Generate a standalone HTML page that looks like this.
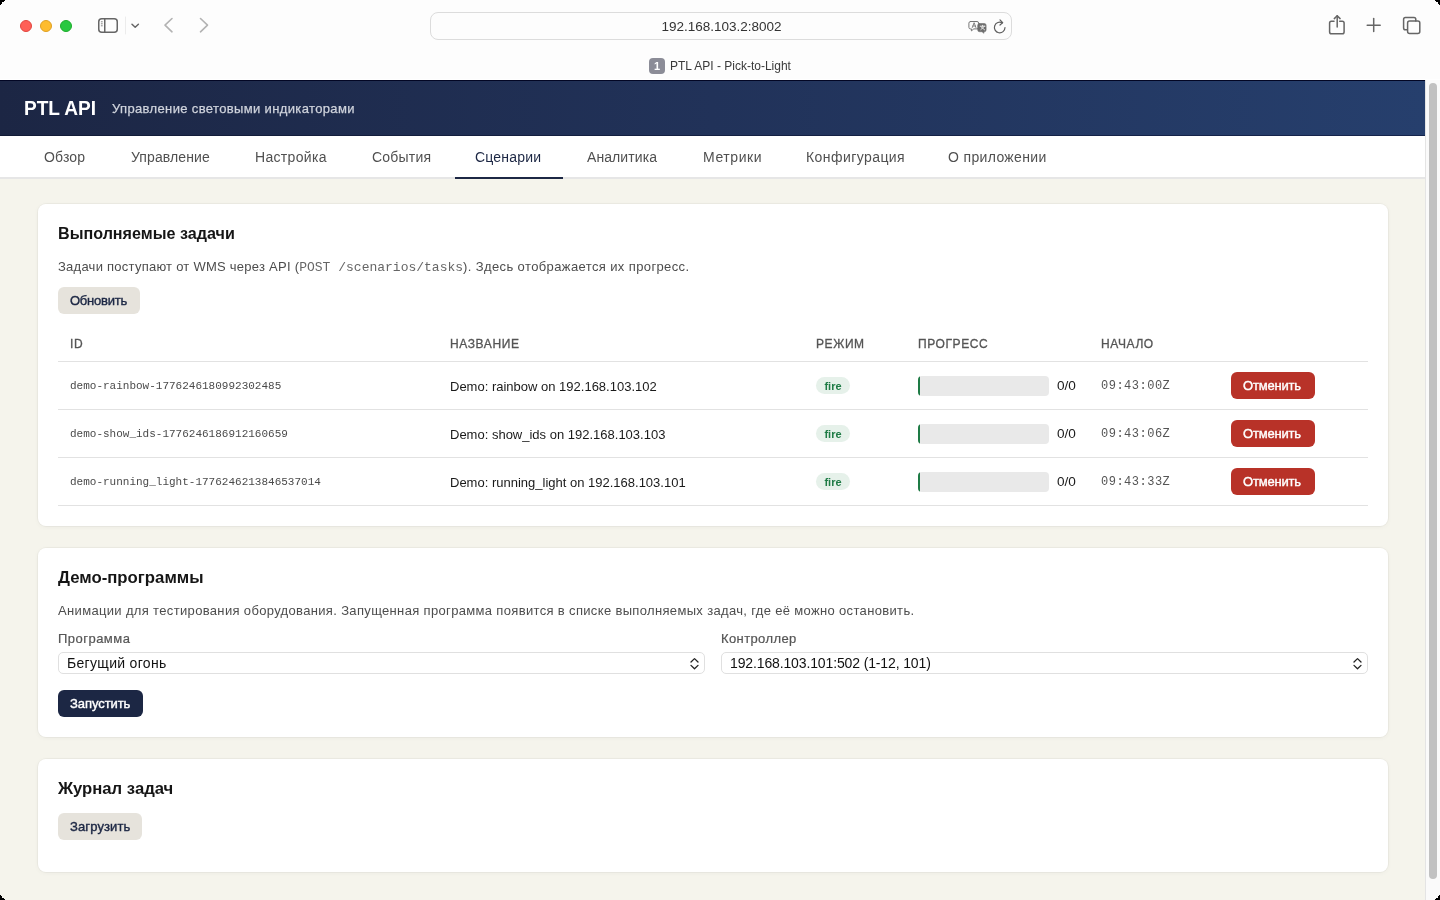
<!DOCTYPE html>
<html><head><meta charset="utf-8">
<style>
*{box-sizing:border-box;margin:0;padding:0}
html,body{width:1440px;height:900px;overflow:hidden;background:#f5f4ec;font-family:"Liberation Sans",sans-serif;color:#1a1a1a}
.a{position:absolute;white-space:nowrap}
.sx{display:inline-block;transform-origin:0 50%}
#chrome{position:absolute;left:0;top:0;width:1440px;height:80px;background:#fdfdfd}
.tl{position:absolute;width:12px;height:12px;border-radius:50%;top:20px}
#url{position:absolute;left:429.5px;top:12px;width:582px;height:28px;border:1px solid #dcdcdc;border-radius:8px;background:#fdfdfd}
#header{position:absolute;left:0;top:80px;width:1425px;height:56px;background:linear-gradient(90deg,#1c2644 0%,#213259 50%,#263f6d 100%)}
#nav{position:absolute;left:0;top:136px;width:1425px;height:43px;background:#fff;border-bottom:2px solid #e6e6e6}
.tab{position:absolute;top:149px;font-size:14px;color:#505050;line-height:16px;white-space:nowrap}
#scroll{position:absolute;left:1425px;top:80px;width:15px;height:820px;background:#fafafa;border-left:1px solid #e4e4e4}
#thumb{position:absolute;left:1429px;top:83px;width:8px;height:796px;border-radius:4px;background:#c1c1c1}
.card{position:absolute;left:38px;width:1350px;background:#fff;border-radius:8px;box-shadow:0 0 0 1px rgba(0,0,0,.035),0 1px 5px rgba(40,40,0,.045)}
.h2{position:absolute;left:58px;font-size:17px;font-weight:bold;color:#151515;line-height:20px;white-space:nowrap}
.desc{position:absolute;left:58px;font-size:13px;color:#4d4d4d;line-height:16px;white-space:nowrap}
.mono{font-family:"Liberation Mono",monospace;letter-spacing:0}
.btn{position:absolute;height:27px;border-radius:6px;font-size:13px;font-weight:normal;line-height:27px;white-space:nowrap;-webkit-text-stroke:.4px currentColor}
.btn span{position:absolute;left:12px;top:0;transform-origin:0 50%}
.btn.sec{background:#e6e3dc;color:#1c2744}
.btn.dark{background:#1c2744;color:#fff;-webkit-text-stroke:.4px #fff}
.btn.red{background:#b83228;color:#fff;-webkit-text-stroke:.4px #fff}
.th{position:absolute;top:337px;font-size:12px;font-weight:normal;color:#555;letter-spacing:.6px;line-height:14px;-webkit-text-stroke:.3px currentColor}
.hr{position:absolute;left:58px;width:1310px;height:1px;background:#e2e2e2}
.cell{position:absolute;font-size:13px;line-height:16px;white-space:nowrap;color:#1a1a1a}
.id{position:absolute;left:70px;font-family:"Liberation Mono",monospace;font-size:11px;color:#4a4a4a;line-height:14px;white-space:nowrap}
.badge{position:absolute;left:816px;width:34px;height:17px;border-radius:9px;background:#e6f1ea;color:#1e7b45;font-size:11px;font-weight:bold;text-align:center;line-height:18px}
.bar{position:absolute;left:918px;width:131px;height:20px;border-radius:4px;background:#e9e9e9;overflow:hidden}
.bar i{position:absolute;left:0;top:0;width:2px;height:20px;background:#1e7b45}
.time{position:absolute;left:1101px;font-family:"Liberation Mono",monospace;font-size:12px;color:#555;line-height:14px;letter-spacing:.5px;white-space:nowrap}
.label{position:absolute;font-size:13px;color:#555;line-height:16px;white-space:nowrap;-webkit-text-stroke:.2px currentColor}
.sel{position:absolute;top:652px;height:22px;border:1px solid #e0e0e0;border-radius:5px;background:#fff}
.sel span{position:absolute;left:8px;top:2px;font-size:14px;color:#111;line-height:16px;white-space:nowrap}
.sel svg{position:absolute;left:631px;top:3.5px}
.wrap{position:absolute;left:0;top:0;width:1440px;height:900px;will-change:transform}</style></head><body><div class="wrap">
<div id="chrome">
  <div id="url"></div>
  <div class="tl" style="left:20px;background:#ff5f57;border:0.5px solid #e2463f"></div>
  <div class="tl" style="left:40px;background:#febc2e;border:0.5px solid #dfa023"></div>
  <div class="tl" style="left:60px;background:#28c840;border:0.5px solid #1dad2b"></div>
  <svg class="a" style="left:0;top:0" width="1440" height="80" viewBox="0 0 1440 80" fill="none" stroke-linecap="round" stroke-linejoin="round">
    <!-- sidebar -->
    <rect x="98.75" y="18.75" width="18.5" height="13.5" rx="3" stroke="#666" stroke-width="1.5"/>
    <line x1="104.75" y1="19" x2="104.75" y2="32" stroke="#666" stroke-width="1.5"/>
    <line x1="101.3" y1="21.8" x2="102.3" y2="21.8" stroke="#777" stroke-width="0.9"/>
    <line x1="101.3" y1="23.8" x2="102.3" y2="23.8" stroke="#777" stroke-width="0.9"/>
    <line x1="101.3" y1="25.8" x2="102.3" y2="25.8" stroke="#777" stroke-width="0.9"/>
    <line x1="125.5" y1="17" x2="125.5" y2="34" stroke="#ececec" stroke-width="1"/>
    <!-- chevron down -->
    <polyline points="132,24.2 135.2,27.2 138.4,24.2" stroke="#666" stroke-width="1.5"/>
    <!-- back/forward -->
    <polyline points="172,18.5 165,25.2 172,31.8" stroke="#b3b3b3" stroke-width="1.6"/>
    <polyline points="200.5,18.5 207.5,25.2 200.5,31.8" stroke="#b3b3b3" stroke-width="1.6"/>
    <!-- translate -->
    <path d="M970.5 21.5 h6.5 a1.6 1.6 0 0 1 1.6 1.6 v4.2 a1.6 1.6 0 0 1 -1.6 1.6 h-3.2 l-2.4 2 v-2 h-0.9 a1.6 1.6 0 0 1 -1.6 -1.6 v-4.2 a1.6 1.6 0 0 1 1.6 -1.6z" stroke="#777" stroke-width="1"/>
    <path d="M972.3 27.5 l1.8 -4.8 l1.8 4.8 M972.9 26 h2.4" stroke="#777" stroke-width="0.9"/>
    <path d="M979.5 23.5 h4.8 a1.8 1.8 0 0 1 1.8 1.8 v4.6 a1.8 1.8 0 0 1 -1.8 1.8 h-0.4 v1.6 l-1.9 -1.6 h-2.5 a1.8 1.8 0 0 1 -1.8 -1.8 v-4.6 a1.8 1.8 0 0 1 1.8 -1.8z" fill="#6e6e6e" stroke="#6e6e6e" stroke-width="0.6"/>
    <path d="M980.2 26.2 h4.8 M982.6 25.3 v1 M980.8 29.6 l3.6 -3.2 M981 26.8 l3.6 3" stroke="#fff" stroke-width="0.8"/>
    <!-- reload -->
    <path d="M1005 27.6 a5.3 5.3 0 1 1 -2.7 -4.7" stroke="#5e5e5e" stroke-width="1.2"/>
    <polyline points="1000,19.9 1002.7,22.6 1000,25" stroke="#5e5e5e" stroke-width="1.2"/>
    <!-- share -->
    <path d="M1334 21.3 h-2.6 a1.8 1.8 0 0 0 -1.8 1.8 v8.9 a1.8 1.8 0 0 0 1.8 1.8 h10.9 a1.8 1.8 0 0 0 1.8 -1.8 v-8.9 a1.8 1.8 0 0 0 -1.8 -1.8 h-2.6" stroke="#666" stroke-width="1.5"/>
    <line x1="1337.2" y1="15.8" x2="1337.2" y2="27" stroke="#666" stroke-width="1.5"/>
    <polyline points="1334.3,18.6 1337.2,15.8 1340.1,18.6" stroke="#666" stroke-width="1.5"/>
    <!-- plus -->
    <line x1="1373.7" y1="18.6" x2="1373.7" y2="31.6" stroke="#666" stroke-width="1.5"/>
    <line x1="1367.2" y1="25.2" x2="1380.2" y2="25.2" stroke="#666" stroke-width="1.5"/>
    <!-- tabs -->
    <path d="M1407 29.8 h-1.6 a1.8 1.8 0 0 1 -1.8 -1.8 v-8.6 a1.8 1.8 0 0 1 1.8 -1.8 h8.6 a1.8 1.8 0 0 1 1.8 1.8 v1.5" stroke="#666" stroke-width="1.5"/>
    <rect x="1407.6" y="21" width="12.2" height="12.4" rx="2" stroke="#666" stroke-width="1.5"/>
  </svg>
</div>
<div class="a" style="left:1.5px;width:1440px;top:18.8px;text-align:center;font-size:13.5px;color:#333;line-height:16px">192.168.103.2:8002</div>
<div class="a" style="left:649px;top:58px;width:16px;height:16px;border-radius:4px;background:#8b8c97;color:#fff;font-size:11px;font-weight:bold;text-align:center;line-height:16px">1</div>
<div class="a" style="left:670px;top:59px;font-size:12px;color:#3a3a3a;line-height:14px">PTL API - Pick-to-Light</div>

<div id="header"></div>
<div class="a" style="left:0;top:79px;width:1440px;height:1px;background:#fff"></div>
<div class="a" style="left:0;top:80px;width:1425px;height:1px;background:#020624"></div>
<div class="a" style="left:0;top:135px;width:1425px;height:1px;background:linear-gradient(90deg,#121b36,#15244c)"></div>
<div class="a" style="left:24px;top:96px;font-size:21px;font-weight:bold;color:#fff;line-height:24px"><span class="sx" style="transform:scaleX(.908)">PTL API</span></div>
<div class="a" style="left:112px;top:100.8px;font-size:13px;color:#cfd3dc;line-height:16px;letter-spacing:.36px;-webkit-text-stroke:.25px #cfd3dc">Управление световыми индикаторами</div>

<div id="nav"></div>
<div class="tab" style="left:44px;letter-spacing:.14px">Обзор</div>
<div class="tab" style="left:131px;letter-spacing:.11px">Управление</div>
<div class="tab" style="left:255px;letter-spacing:.32px">Настройка</div>
<div class="tab" style="left:372px;letter-spacing:.2px">События</div>
<div class="tab" style="left:475px;letter-spacing:.2px;color:#1c2744">Сценарии</div>
<div class="a" style="left:455px;top:177px;width:108px;height:2px;background:#1c2744"></div>
<div class="tab" style="left:587px;letter-spacing:.08px">Аналитика</div>
<div class="tab" style="left:703px;letter-spacing:.58px">Метрики</div>
<div class="tab" style="left:806px;letter-spacing:.43px">Конфигурация</div>
<div class="tab" style="left:948px;letter-spacing:.35px">О приложении</div>

<div class="card" style="top:204px;height:322px"></div>
<div class="h2" style="top:224px"><span class="sx" style="transform:scaleX(.949)">Выполняемые задачи</span></div>
<div class="desc" style="top:259px"><span style="letter-spacing:.25px">Задачи поступают от WMS через API (</span><span class="mono" style="color:#666">POST /scenarios/tasks</span><span style="letter-spacing:.385px">). Здесь отображается их прогресс.</span></div>
<div class="btn sec" style="left:58px;top:287px;width:82px"><span style="letter-spacing:-.24px">Обновить</span></div>

<div class="th" style="left:70px">ID</div>
<div class="th" style="left:450px">НАЗВАНИЕ</div>
<div class="th" style="left:816px">РЕЖИМ</div>
<div class="th" style="left:918px">ПРОГРЕСС</div>
<div class="th" style="left:1101px">НАЧАЛО</div>
<div class="hr" style="top:361px"></div>
<div class="hr" style="top:409px"></div>
<div class="hr" style="top:457px"></div>
<div class="hr" style="top:505px"></div>

<div class="id" style="top:379px">demo-rainbow-1776246180992302485</div>
<div class="cell" style="left:450px;top:379px">Demo: rainbow on 192.168.103.102</div>
<div class="badge" style="top:377px">fire</div>
<div class="bar" style="top:376px"><i></i></div>
<div class="cell" style="left:1057px;top:378px;font-size:13.6px">0/0</div>
<div class="time" style="top:379px">09:43:00Z</div>
<div class="btn red" style="left:1231px;top:372px;width:84px"><span style="letter-spacing:-.19px">Отменить</span></div>

<div class="id" style="top:427px">demo-show_ids-1776246186912160659</div>
<div class="cell" style="left:450px;top:427px">Demo: show_ids on 192.168.103.103</div>
<div class="badge" style="top:425px">fire</div>
<div class="bar" style="top:424px"><i></i></div>
<div class="cell" style="left:1057px;top:426px;font-size:13.6px">0/0</div>
<div class="time" style="top:427px">09:43:06Z</div>
<div class="btn red" style="left:1231px;top:420px;width:84px"><span style="letter-spacing:-.19px">Отменить</span></div>

<div class="id" style="top:475px">demo-running_light-1776246213846537014</div>
<div class="cell" style="left:450px;top:475px">Demo: running_light on 192.168.103.101</div>
<div class="badge" style="top:473px">fire</div>
<div class="bar" style="top:472px"><i></i></div>
<div class="cell" style="left:1057px;top:474px;font-size:13.6px">0/0</div>
<div class="time" style="top:475px">09:43:33Z</div>
<div class="btn red" style="left:1231px;top:468px;width:84px"><span style="letter-spacing:-.19px">Отменить</span></div>

<div class="card" style="top:548px;height:189px"></div>
<div class="h2" style="top:568px"><span class="sx" style="transform:scaleX(.986)">Демо-программы</span></div>
<div class="desc" style="top:603px;letter-spacing:.34px">Анимации для тестирования оборудования. Запущенная программа появится в списке выполняемых задач, где её можно остановить.</div>
<div class="label" style="left:58px;top:631px;letter-spacing:.47px">Программа</div>
<div class="label" style="left:721px;top:631px;letter-spacing:.39px">Контроллер</div>
<div class="sel" style="left:58px;width:647px"><span style="letter-spacing:.31px">Бегущий огонь</span><svg width="9" height="13" viewBox="0 0 9 13" fill="none" stroke="#222" stroke-width="1.3" stroke-linecap="round" stroke-linejoin="round"><polyline points="1,5 4.5,1.6 8,5"/><polyline points="1,8.4 4.5,11.8 8,8.4"/></svg></div>
<div class="sel" style="left:721px;width:647px"><span style="letter-spacing:-.13px">192.168.103.101:502 (1-12, 101)</span><svg width="9" height="13" viewBox="0 0 9 13" fill="none" stroke="#222" stroke-width="1.3" stroke-linecap="round" stroke-linejoin="round"><polyline points="1,5 4.5,1.6 8,5"/><polyline points="1,8.4 4.5,11.8 8,8.4"/></svg></div>
<div class="btn dark" style="left:58px;top:690px;width:85px"><span style="letter-spacing:-.07px">Запустить</span></div>

<div class="card" style="top:759px;height:113px"></div>
<div class="h2" style="top:779px"><span class="sx" style="transform:scaleX(.98)">Журнал задач</span></div>
<div class="btn sec" style="left:58px;top:813px;width:84px"><span style="letter-spacing:.12px">Загрузить</span></div>

<div id="scroll"></div>
<div id="thumb"></div>
<svg class="a" style="left:0;top:0;z-index:10" width="1440" height="900" shape-rendering="crispEdges" fill="#000"><rect x="0" y="0" width="5" height="1"/><rect x="1435" y="0" width="5" height="1"/><rect x="0" y="899" width="5" height="1"/><rect x="1435" y="899" width="5" height="1"/><rect x="0" y="1" width="4" height="1"/><rect x="1436" y="1" width="4" height="1"/><rect x="0" y="898" width="4" height="1"/><rect x="1436" y="898" width="4" height="1"/><rect x="0" y="2" width="2" height="1"/><rect x="1438" y="2" width="2" height="1"/><rect x="0" y="897" width="2" height="1"/><rect x="1438" y="897" width="2" height="1"/><rect x="0" y="3" width="2" height="1"/><rect x="1438" y="3" width="2" height="1"/><rect x="0" y="896" width="2" height="1"/><rect x="1438" y="896" width="2" height="1"/><rect x="0" y="4" width="1" height="1"/><rect x="1439" y="4" width="1" height="1"/><rect x="0" y="895" width="1" height="1"/><rect x="1439" y="895" width="1" height="1"/></svg>
</div></body></html>
